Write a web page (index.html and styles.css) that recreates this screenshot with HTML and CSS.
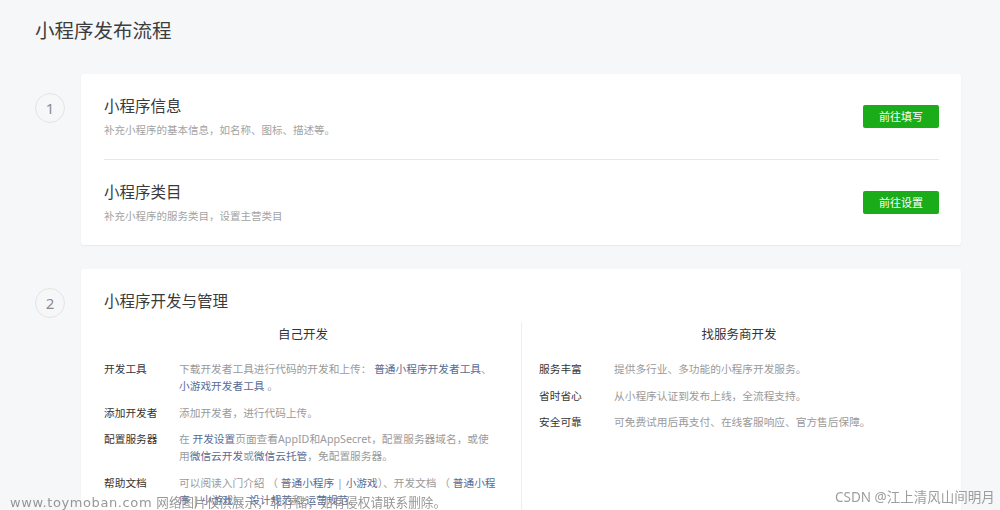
FILE: index.html
```html
<!DOCTYPE html>
<html lang="zh-CN">
<head>
<meta charset="utf-8">
<title>小程序发布流程</title>
<link rel="stylesheet" href="styles.css">
</head>
<body>
<div class="page">
  <h1 class="page-title">小程序发布流程</h1>

  <div class="step">
    <div class="step-num">1</div>
    <div class="card">
      <div class="item">
        <div class="item-text">
          <h2 class="item-title">小程序信息</h2>
          <p class="item-desc">补充小程序的基本信息，如名称、图标、描述等。</p>
        </div>
        <a class="btn">前往填写</a>
      </div>
      <div class="item">
        <div class="item-text">
          <h2 class="item-title">小程序类目</h2>
          <p class="item-desc">补充小程序的服务类目，设置主营类目</p>
        </div>
        <a class="btn">前往设置</a>
      </div>
    </div>
  </div>

  <div class="step">
    <div class="step-num">2</div>
    <div class="card card-dev">
      <h2 class="item-title">小程序开发与管理</h2>
      <div class="dev-cols">
        <div class="dev-col dev-col-left">
          <h3 class="dev-head">自己开发</h3>
          <div class="row">
            <span class="row-label">开发工具</span>
            <span class="row-desc">下载开发者工具进行代码的开发和上传： <a class="link">普通小程序开发者工具</a>、<a class="link">小游戏开发者工具</a> 。</span>
          </div>
          <div class="row">
            <span class="row-label">添加开发者</span>
            <span class="row-desc">添加开发者，进行代码上传。</span>
          </div>
          <div class="row">
            <span class="row-label">配置服务器</span>
            <span class="row-desc">在 <a class="link">开发设置</a>页面查看AppID和AppSecret，配置服务器域名，或使用<a class="link">微信云开发</a>或<a class="link">微信云托管</a>，免配置服务器。</span>
          </div>
          <div class="row">
            <span class="row-label">帮助文档</span>
            <span class="row-desc">可以阅读入门介绍 （ <a class="link">普通小程序</a> | <a class="link">小游戏</a>）、开发文档 （ <a class="link">普通小程序</a> | <a class="link">小游戏</a>）、<a class="link">设计规范</a>和 <a class="link">运营规范</a>。</span>
          </div>
        </div>
        <div class="dev-col dev-col-right">
          <h3 class="dev-head">找服务商开发</h3>
          <div class="row">
            <span class="row-label">服务丰富</span>
            <span class="row-desc">提供多行业、多功能的小程序开发服务。</span>
          </div>
          <div class="row">
            <span class="row-label">省时省心</span>
            <span class="row-desc">从小程序认证到发布上线，全流程支持。</span>
          </div>
          <div class="row">
            <span class="row-label">安全可靠</span>
            <span class="row-desc">可免费试用后再支付、在线客服响应、官方售后保障。</span>
          </div>
        </div>
      </div>
    </div>
  </div>
</div>

<div class="wm-left"><span class="wm-url">www.toymoban.com</span> <span class="wm-cn">网络图片仅供展示，非存储，如有侵权请联系删除。</span></div>
<div class="wm-right">CSDN @江上清风山间明月</div>
</body>
</html>
```

FILE: styles.css
```css
html, body {
  margin: 0;
  padding: 0;
  background: #f6f7f9;
  font-family: "Noto Sans", "Noto Sans CJK SC", sans-serif;
  color: #353535;
  overflow: hidden;
}

.page {
  padding: 17px 39px 0 35px;
  height: 600px;
}

.page-title {
  margin: 0 0 29px;
  font-size: 19.5px;
  font-weight: 400;
  line-height: 28px;
  color: #3d3d3d;
}

.step {
  display: flex;
  gap: 16px;
  margin-bottom: 24px;
}

.step-num {
  flex: none;
  width: 28px;
  height: 28px;
  margin-top: 19px;
  border: 1px solid #e4e4e4;
  border-radius: 50%;
  display: flex;
  align-items: center;
  justify-content: center;
  font-size: 15px;
  color: #8c8c8c;
}

.card {
  flex: 1;
  background: #fff;
  border-radius: 3px;
  box-shadow: 0 1px 2px rgba(0, 0, 0, 0.06);
  padding: 0 22px 0 23px;
}

.item {
  display: flex;
  align-items: center;
  justify-content: space-between;
  padding: 21px 0;
  border-bottom: 1px solid #e7e7e7;
}

.item:last-child {
  border-bottom: none;
}

.item-title {
  margin: 0;
  font-size: 15.5px;
  font-weight: 400;
  line-height: 22px;
  color: #3a3a3a;
}

.item-desc {
  margin: 5px 0 0;
  font-size: 10.5px;
  line-height: 16px;
  color: #a3a3a3;
}

.btn {
  width: 76px;
  height: 23px;
  line-height: 23px;
  text-align: center;
  background: #1aad19;
  color: #fff;
  font-size: 11px;
  border-radius: 2px;
}

.card-dev {
  padding-top: 21px;
  min-height: 400px;
}

.dev-cols {
  display: grid;
  grid-template-columns: 398px 1fr;
  margin-top: 10px;
}

.dev-col-left .row-desc {
  padding-right: 5px;
}

.dev-col-right {
  margin-left: 19px;
  border-left: 1px solid #eeeeee;
  padding-left: 17px;
  min-height: 300px;
}

.dev-head {
  margin: 0 0 13px;
  font-size: 12.5px;
  font-weight: 400;
  line-height: 26px;
  text-align: center;
  color: #353535;
}

.row {
  display: grid;
  grid-template-columns: 75px 1fr;
  margin-bottom: 9.5px;
  font-size: 10.7px;
  line-height: 17px;
}

.row-label {
  color: #353535;
}

.row-desc {
  color: #9a9a9a;
}

.link {
  color: #576b95;
}

.wm-left {
  position: fixed;
  left: 10px;
  top: 492px;
  line-height: 18px;
  color: rgba(125, 125, 125, 0.8);
  white-space: nowrap;
}

.wm-url {
  font-family: "DejaVu Sans", sans-serif;
  font-size: 13px;
  letter-spacing: 0.6px;
}

.wm-cn {
  font-family: "Noto Sans CJK SC", sans-serif;
  font-size: 12.6px;
}

.wm-right {
  position: fixed;
  left: 835px;
  top: 488px;
  font-size: 13.5px;
  line-height: 18px;
  color: rgba(140, 140, 140, 0.85);
  white-space: nowrap;
}
```
